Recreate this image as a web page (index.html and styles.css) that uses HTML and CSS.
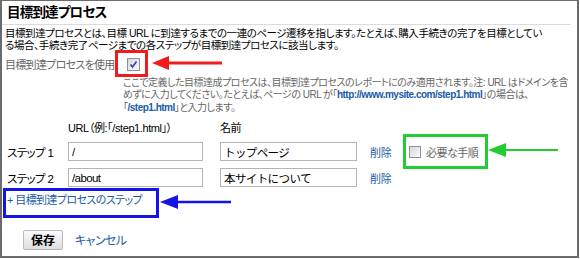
FILE: index.html
```html
<!DOCTYPE html>
<html lang="ja">
<head>
  <meta charset="UTF-8" />
  <title>目標到達プロセス</title>
  <link rel="stylesheet" href="styles.css">
</head>
<body>
  <div class="frame">
    <h2 class="titulo">目標到達プロセス</h2>
    <p class="desc">目標到達プロセスとは、目標 URL に到達するまでの一連のページ遷移を指します。たとえば、購入手続きの完了を目標としてい<br>る場合、手続き完了ページまでの各ステップが目標到達プロセスに該当します。</p>

    <div class="usar">
      <span class="usar-label">目標到達プロセスを使用</span>
      <span class="check">
        <svg width="9" height="9" viewBox="0 0 9 9"><polyline points="1.5,4.5 3.5,7 7.5,1.5" fill="none" stroke="#2a3fb8" stroke-width="1.6"/></svg>
      </span>
    </div>

    <p class="ayuda">ここで定義した目標達成プロセスは、目標到達プロセスのレポートにのみ適用されます。注: URL はドメインを含<br>めずに入力してください。たとえば、ページの URL が「<a class="url" href="#">http://www.mysite.com/step1.html</a>」の場合は、<br>「<a class="url" href="#">/step1.html</a>」と入力します。</p>

    <div class="pasos">
      <div class="fila cabecera">
        <span class="etiqueta"></span>
        <span class="col-url">URL（例:「/step1.html」）</span>
        <span class="col-nombre">名前</span>
      </div>
      <div class="fila">
        <span class="etiqueta">ステップ 1</span>
        <input class="campo campo-url" value="/">
        <input class="campo campo-nombre" value="トップページ">
        <a class="borrar" href="#">削除</a>
        <label class="necesario"><span class="check"></span>必要な手順</label>
      </div>
      <div class="fila">
        <span class="etiqueta">ステップ 2</span>
        <input class="campo campo-url" value="/about">
        <input class="campo campo-nombre" value="本サイトについて">
        <a class="borrar" href="#">削除</a>
      </div>
    </div>

    <a class="agregar" href="#">+ 目標到達プロセスのステップ</a>

    <div class="acciones">
      <button class="guardar">保存</button>
      <a class="cancelar" href="#">キャンセル</a>
    </div>

    <!-- marcas de anotación -->
    <div class="marca marca-roja"></div>
    <div class="marca marca-verde"></div>
    <div class="marca marca-azul"></div>

    <svg class="flecha flecha-roja" width="72" height="16" viewBox="0 0 72 16">
      <line x1="14" y1="8" x2="70" y2="8" stroke="#ee1c1c" stroke-width="3"/>
      <polygon points="0,8 17,1 17,15" fill="#ee1c1c"/>
    </svg>
    <svg class="flecha flecha-azul" width="72" height="16" viewBox="0 0 72 16">
      <line x1="14" y1="8" x2="71" y2="8" stroke="#1414e6" stroke-width="2.5"/>
      <polygon points="0,8 18,1 18,15" fill="#1414e6"/>
    </svg>
    <svg class="flecha flecha-verde" width="72" height="16" viewBox="0 0 72 16">
      <line x1="14" y1="8" x2="70" y2="8" stroke="#22cc33" stroke-width="2"/>
      <polygon points="0,8 18,1 18,15" fill="#22cc33"/>
    </svg>
  </div>
</body>
</html>
```

FILE: styles.css
```css
/* Página de configuración: embudo de objetivos */
body {
  margin: 0;
  background: #fff;
  font-family: "Liberation Sans", "Noto Sans CJK JP", sans-serif;
  font-feature-settings: "palt";
  color: #000;
}

.frame {
  position: relative;
  box-sizing: border-box;
  width: 579px;
  height: 258px;
  border: 2px solid #6b6b6b;
  border-top-width: 1px;
}

.titulo {
  margin: 0 6px 0 0;
  height: 23px;
  padding-left: 5px;
  font-size: 13.5px;
  letter-spacing: -0.8px;
  line-height: 24px;
  font-weight: bold;
  border-bottom: 1px solid #dcdcdc;
}

.desc {
  margin: 2px 0 0;
  padding-left: 3px;
  font-size: 10.5px;
  letter-spacing: -0.45px;
  line-height: 12px;
  white-space: nowrap;
}

.usar {
  display: flex;
  align-items: center;
  height: 26px;
  padding-left: 3px;
}

.usar-label {
  color: #666;
  font-size: 11px;
  letter-spacing: -0.7px;
  width: 122px;
}

.check {
  display: inline-flex;
  align-items: center;
  justify-content: center;
  box-sizing: border-box;
  width: 13px;
  height: 13px;
  border: 1px solid #8f8f9d;
  background: linear-gradient(135deg, #d8d8d8, #fafafa);
}

.ayuda {
  margin: 0;
  padding-left: 121px;
  color: #666;
  font-size: 10px;
  letter-spacing: -0.5px;
  line-height: 12.3px;
  white-space: nowrap;
}

.url {
  color: #1a5aa8;
  font-weight: bold;
  text-decoration: none;
}

.pasos {
  margin-top: 6px;
}

.fila {
  display: flex;
  align-items: center;
  height: 26px;
  font-size: 11.5px;
  letter-spacing: -0.6px;
}

.cabecera {
  height: 19px;
  align-items: flex-start;
  line-height: 16px;
  font-size: 11px;
  letter-spacing: -0.4px;
}

.etiqueta {
  width: 66px;
  padding-left: 5px;
  box-sizing: border-box;
}

.col-url {
  width: 152px;
}

.campo {
  box-sizing: border-box;
  height: 19px;
  margin: 0;
  padding: 0 3px;
  border: 1px solid #b4b4b4;
  font-family: inherit;
  font-size: 11.5px;
  letter-spacing: -0.6px;
  color: #000;
}

.campo-url {
  width: 135px;
  margin-right: 17px;
}

.campo-nombre {
  width: 137px;
  margin-right: 13px;
}

.borrar {
  color: #1a5aa8;
  font-size: 11px;
  letter-spacing: -0.3px;
  text-decoration: none;
  width: 33px;
}

.necesario {
  display: flex;
  align-items: center;
  gap: 5px;
  margin-left: 6px;
  color: #666;
  font-size: 11px;
  letter-spacing: -0.5px;
}

.necesario .check {
  width: 12px;
  height: 12px;
}

.agregar {
  display: block;
  margin-top: -3px;
  padding-left: 5px;
  height: 24px;
  line-height: 24px;
  color: #1a5aa8;
  font-size: 11px;
  letter-spacing: -0.6px;
  text-decoration: none;
}

.acciones {
  display: flex;
  align-items: center;
  gap: 12px;
  margin-top: 18px;
  padding-left: 21px;
}

.guardar {
  width: 40px;
  height: 20px;
  padding: 0;
  border: 1px solid #b8b8b8;
  border-radius: 2px;
  background: linear-gradient(#fbfbfb, #dedede);
  font-family: inherit;
  font-size: 12px;
  font-weight: bold;
}

.cancelar {
  color: #1a5aa8;
  font-size: 12px;
  letter-spacing: -0.6px;
  text-decoration: none;
}

/* Recuadros y flechas que se superponen */
.marca {
  position: absolute;
  box-sizing: border-box;
  border: 3px solid;
}

.marca-roja {
  left: 113px;
  top: 49px;
  width: 33px;
  height: 27px;
  border-color: #ee1c1c;
}

.marca-verde {
  left: 401px;
  top: 133px;
  width: 85px;
  height: 35px;
  border-color: #22cc33;
}

.marca-azul {
  left: 1px;
  top: 187px;
  width: 156px;
  height: 30px;
  border-color: #1414e6;
}

.flecha {
  position: absolute;
}

.flecha-roja { left: 150px; top: 54px; }
.flecha-azul { left: 158px; top: 193px; }
.flecha-verde { left: 486px; top: 141px; }
```
